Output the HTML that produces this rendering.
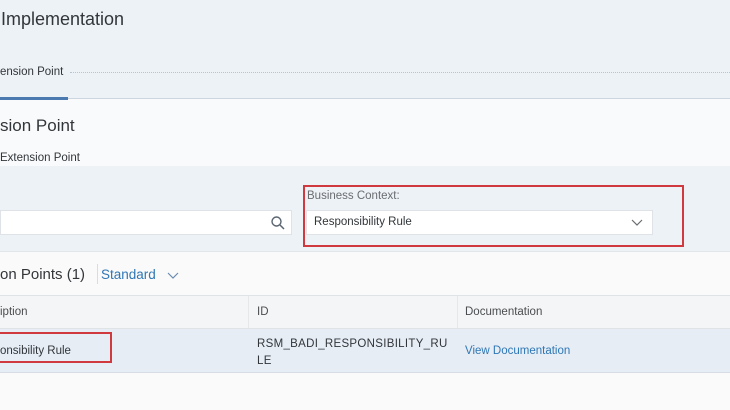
<!DOCTYPE html><html><head><style>
body{margin:0;width:730px;height:410px;overflow:hidden;background:#fafafa;font-family:"Liberation Sans",sans-serif;color:#32363a;position:relative}
div,span{position:absolute;box-sizing:border-box}
</style></head><body>
<div style="left:0;top:0;width:730px;height:99px;background:#edf2f7"></div>
<span style="left:1px;top:9px;font-size:18px;color:#32363a">Implementation</span>
<span style="left:0;top:66px;font-size:11.5px">ension Point</span>
<div style="left:70px;top:72px;width:660px;border-top:1px dotted #b8c4d0"></div>
<div style="left:0;top:97px;width:68px;height:3px;background:#4a7ab0"></div>
<div style="left:68px;top:98px;width:662px;height:1px;background:#cdd6e0"></div>
<div style="left:0;top:100px;width:730px;height:66px;background:#f9fafb"></div>
<span style="left:0;top:116px;font-size:17px">sion Point</span>
<span style="left:0;top:152px;font-size:11.5px">Extension Point</span>
<div style="left:0;top:166px;width:730px;height:86px;background:#edf2f6;border-bottom:1px solid #e2e6ea"></div>
<div style="left:0;top:210px;width:292px;height:25px;background:#fff;border:1px solid #dfe3e8"></div>
<svg style="position:absolute;left:270px;top:215px" width="16" height="16"><circle cx="6.5" cy="6.5" r="4.5" fill="none" stroke="#5a6470" stroke-width="1.4"/><line x1="10" y1="10" x2="14" y2="14" stroke="#5a6470" stroke-width="1.5"/></svg>
<span style="left:307px;top:190px;font-size:11.5px;color:#6a6d70">Business Context:</span>
<div style="left:306px;top:210px;width:347px;height:25px;background:#fff;border:1px solid #dfe3e8"></div>
<span style="left:314px;top:216px;font-size:11.5px;color:#32363a">Responsibility Rule</span>
<svg style="position:absolute;left:631px;top:219px" width="12" height="8"><polyline points="1,1 6,6 11,1" fill="none" stroke="#6a6d70" stroke-width="1.2"/></svg>
<div style="left:303px;top:185px;width:381px;height:62px;border:2px solid #d0393d"></div>
<span style="left:0;top:266px;font-size:15px">on Points (1)</span>
<div style="left:97px;top:264px;width:1px;height:20px;background:#d8dde2"></div>
<span style="left:101px;top:267px;font-size:13.5px;color:#2f77b5">Standard</span>
<svg style="position:absolute;left:167px;top:272px" width="12" height="8"><polyline points="1,1 6,6 11,1" fill="none" stroke="#6a8cb0" stroke-width="1.2"/></svg>
<div style="left:0;top:295px;width:730px;height:34px;background:#f4f5f6;border-top:1px solid #e0e3e6;border-bottom:1px solid #e0e3e6"></div>
<div style="left:248px;top:296px;width:1px;height:32px;background:#e5e7ea"></div>
<div style="left:457px;top:296px;width:1px;height:32px;background:#e5e7ea"></div>
<span style="left:0;top:306px;font-size:11.5px;color:#4a4d50">iption</span>
<span style="left:257px;top:306px;font-size:11.5px;color:#4a4d50">ID</span>
<span style="left:465px;top:306px;font-size:11.5px;color:#4a4d50">Documentation</span>
<div style="left:0;top:329px;width:730px;height:44px;background:#e6edf5;border-bottom:1px solid #d6dde5"></div>
<span style="left:0;top:345px;font-size:11.5px">onsibility Rule</span>
<span style="left:257px;top:336px;font-size:11.5px;line-height:17px;letter-spacing:0.3px">RSM_BADI_RESPONSIBILITY_RU<br>LE</span>
<span style="left:465px;top:345px;font-size:11.5px;color:#2f77b5">View Documentation</span>
<div style="left:-2px;top:332px;width:114px;height:31px;border:2px solid #d0393d"></div>
</body></html>
